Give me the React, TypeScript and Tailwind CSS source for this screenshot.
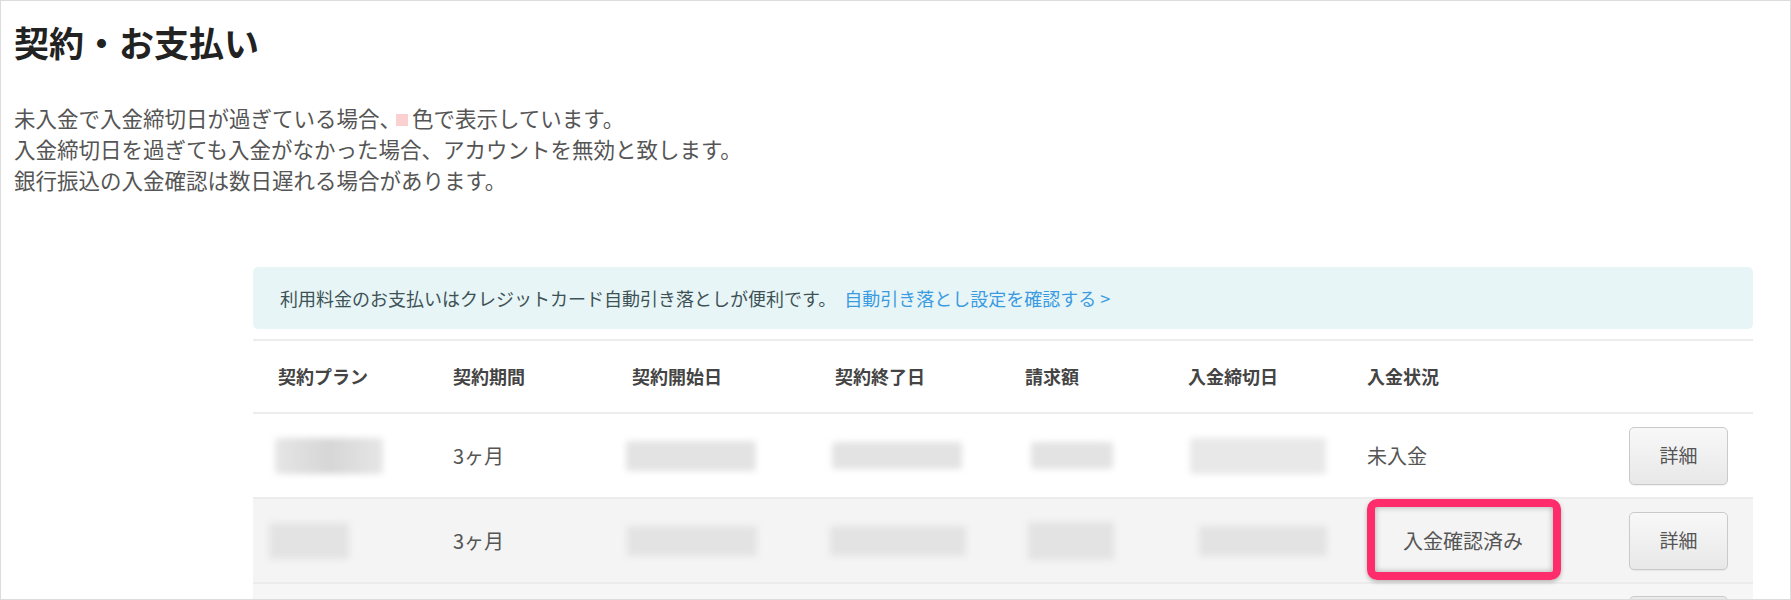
import React from "react";

const cols = "grid grid-cols-[175px_179px_203px_190px_163px_179px_1fr] items-center";

function Blur({ className }: { className: string }) {
  return <span className={`block rounded-[3px] bg-[#e3e3e3] blur-[3px] ${className}`} />;
}

function DetailButton() {
  return (
    <button className="ml-auto mr-[25px] h-[58px] w-[99px] rounded-[5px] border border-[#cacaca] bg-gradient-to-b from-[#f8f8f8] to-[#e8e8e8] text-[19px] text-[#555] shadow-[0_1px_1px_rgba(0,0,0,0.06)]">
      詳細
    </button>
  );
}

export default function App() {
  const headers = ["契約プラン", "契約期間", "契約開始日", "契約終了日", "請求額", "入金締切日", "入金状況"];

  return (
    <div className="h-[600px] w-[1791px] overflow-hidden border border-[#dcdcdc] bg-white font-['Noto_Sans_CJK_JP',sans-serif]">
      <div className="pl-[13px] pt-[21px]">
        <h1 className="text-[35px] font-bold leading-[40px] text-[#222]">契約・お支払い</h1>
        <div className="mt-[40px] text-[21.5px] leading-[31px] text-[#555]">
          <p>
            未入金で入金締切日が過ぎている場合、
            <span className="ml-[-5px] mr-[4px] inline-block h-[12px] w-[12px] bg-[#fad0d0] align-[1px]" />
            色で表示しています。
          </p>
          <p>入金締切日を過ぎても入金がなかった場合、アカウントを無効と致します。</p>
          <p>銀行振込の入金確認は数日遅れる場合があります。</p>
        </div>
      </div>

      <div className="ml-[252px] mt-[72px] w-[1500px]">
        <div className="flex h-[62px] items-center rounded-[5px] bg-[#e7f5f7] pl-[27px] text-[18px] text-[#3e5256]">
          利用料金のお支払いはクレジットカード自動引き落としが便利です。
          <a className="ml-[8px] text-[#3a9be0]">自動引き落とし設定を確認する &gt;</a>
        </div>

        <div className="mt-[10px] border-t-2 border-[#ececec]">
          <div className={`${cols} h-[71px] text-[18px] font-bold text-[#444]`}>
            {headers.map((h) => (
              <div key={h} className="pl-[25px]">
                {h}
              </div>
            ))}
          </div>

          <div className={`${cols} h-[85px] border-t-2 border-[#ececec] text-[20px] text-[#555]`}>
            <div className="pl-[22px]">
              <Blur className="h-[36px] w-[108px] bg-gradient-to-r from-[#e6e6e6] via-[#d6d6d6] to-[#e6e6e6]" />
            </div>
            <div className="pl-[25px]">3ヶ月</div>
            <div className="pl-[19px]">
              <Blur className="h-[30px] w-[130px]" />
            </div>
            <div className="pl-[22px]">
              <Blur className="h-[27px] w-[130px]" />
            </div>
            <div className="pl-[31px]">
              <Blur className="h-[27px] w-[82px] bg-[#dcdcdc]" />
            </div>
            <div className="pl-[27px]">
              <Blur className="h-[36px] w-[136px] bg-[#e8e8e8]" />
            </div>
            <div className="flex items-center pl-[25px]">
              <span>未入金</span>
              <DetailButton />
            </div>
          </div>

          <div className={`${cols} h-[85px] border-t-2 border-[#ececec] bg-[#f4f4f4] text-[20px] text-[#555]`}>
            <div className="pl-[16px]">
              <Blur className="h-[36px] w-[80px] bg-[#e2e2e2]" />
            </div>
            <div className="pl-[25px]">3ヶ月</div>
            <div className="pl-[20px]">
              <Blur className="h-[30px] w-[130px] bg-[#e0e0e0]" />
            </div>
            <div className="pl-[20px]">
              <Blur className="h-[30px] w-[136px] bg-[#e0e0e0]" />
            </div>
            <div className="pl-[28px]">
              <Blur className="h-[38px] w-[86px] bg-[#e0e0e0]" />
            </div>
            <div className="pl-[36px]">
              <Blur className="h-[30px] w-[128px] bg-[#e0e0e0]" />
            </div>
            <div className="flex items-center pl-[61px]">
              <span className="relative leading-[28px]">
                入金確認済み
                <span className="absolute -bottom-[25px] -left-[36px] -right-[38px] -top-[28px] rounded-[10px] border-[8px] border-[#ff2c6c] shadow-[inset_0_0_6px_rgba(0,0,0,0.3),0_2px_4px_rgba(0,0,0,0.25)]" />
              </span>
              <DetailButton />
            </div>
          </div>

          <div className={`${cols} h-[85px] border-t-2 border-[#ececec] bg-[#f6f6f6] text-[20px] text-[#555]`}>
            <div />
            <div />
            <div />
            <div />
            <div />
            <div />
            <div className="flex items-start self-start pl-[25px] pt-[12px]">
              <span className="ml-auto mr-[25px] h-[58px] w-[99px] rounded-[5px] border border-[#cacaca] bg-[#eaeaea]" />
            </div>
          </div>
        </div>
      </div>
    </div>
  );
}
